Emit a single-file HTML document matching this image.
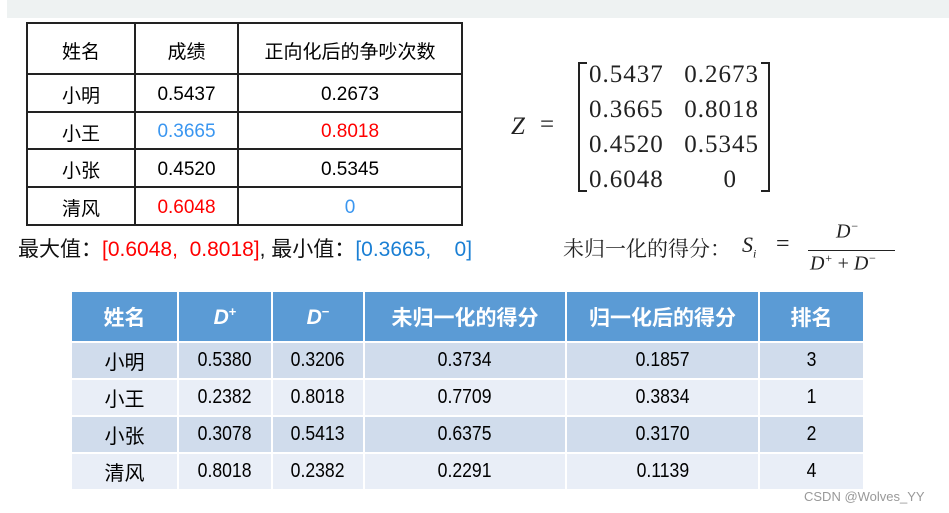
<!DOCTYPE html>
<html><head><meta charset="utf-8"><style>
body{margin:0;width:949px;height:513px;background:#fff;position:relative;overflow:hidden;font-family:"Liberation Sans","Noto Sans CJK SC",sans-serif}
.band{position:absolute;left:7px;top:0;width:942px;height:18px;background:#eef2f2}
table{border-collapse:collapse;position:absolute}
#t1{left:26px;top:22px;font-size:19px;color:#000}
#t1 td{border:2px solid #222;text-align:center;padding:3px 0 0 0}
.r{color:#f00}.b{color:#3a96f0}
.abs{position:absolute;white-space:nowrap}
.m{font-family:"Liberation Serif","DejaVu Serif",serif;font-size:25px;color:#222}
#t2{left:72px;top:292px;border-collapse:separate;border-spacing:2px;margin:-2px}
#t2 td{text-align:center;padding:0;font-size:20px}
#t2 tr.h td{background:#5b9bd5;color:#fff;font-weight:bold;font-size:21px;height:49px}
#t2 tr.o td{background:#d0dcec;height:35px}
#t2 tr.e td{background:#e9eef7;height:35px}
#t2 tr.o td span,#t2 tr.e td span{display:inline-block;transform:scaleX(.88)}
</style></head><body>
<div class="band"></div>
<table id="t1">
<tr style="height:51px"><td style="width:106px">姓名</td><td style="width:101px">成绩</td><td style="width:222px">正向化后的争吵次数</td></tr>
<tr style="height:38px"><td>小明</td><td>0.5437</td><td>0.2673</td></tr>
<tr style="height:37px"><td>小王</td><td class="b">0.3665</td><td class="r">0.8018</td></tr>
<tr style="height:38px"><td>小张</td><td>0.4520</td><td>0.5345</td></tr>
<tr style="height:38px"><td>清风</td><td class="r">0.6048</td><td class="b">0</td></tr>
</table>
<div class="abs" style="left:18px;top:233px;font-size:21px;color:#111">最大值：<span class="r">[0.6048,&nbsp; 0.8018]</span>, 最小值：<span style="color:#1a7fd4">[0.3665, &nbsp;&nbsp; 0]</span></div>
<div class="abs m" style="left:511px;top:113px;font-style:italic">Z</div>
<div class="abs m" style="left:540px;top:111px">=</div>
<div class="abs" style="left:578px;top:62px;width:7px;height:126px;border:2px solid #222;border-right:none"></div>
<div class="abs" style="left:761px;top:62px;width:7px;height:126px;border:2px solid #222;border-left:none"></div>
<div class="abs m" style="left:589px;top:57px;line-height:35px;letter-spacing:1px">0.5437<br>0.3665<br>0.4520<br>0.6048</div>
<div class="abs m" style="left:681px;top:57px;line-height:35px;width:78px;text-align:right;letter-spacing:1px">0.2673<br>0.8018<br>0.5345<br><span style="margin-right:22px">0</span></div>
<div class="abs" style="left:563px;top:233px;font-size:21px;color:#222;font-family:'Noto Serif CJK SC',serif">未归一化的得分：</div>
<div class="abs m" style="left:742px;top:232px;font-size:22px;font-style:italic">S<sub style="font-size:12px">i</sub></div>
<div class="abs m" style="left:776px;top:231px;font-size:24px">=</div>
<div class="abs m" style="left:836px;top:219px;font-size:20px;font-style:italic">D<sup style="font-size:12px">−</sup></div>
<div class="abs" style="left:808px;top:250px;width:87px;height:1px;background:#222"></div>
<div class="abs m" style="left:810px;top:251px;font-size:20px;font-style:italic">D<sup style="font-size:12px">+</sup> <span style="font-style:normal">+</span> D<sup style="font-size:12px">−</sup></div>
<table id="t2">
<tr class="h"><td style="width:105px">姓名</td><td style="width:92px"><i>D</i><sup style="font-size:13px">+</sup></td><td style="width:90px"><i>D</i><sup style="font-size:13px">−</sup></td><td style="width:200px">未归一化的得分</td><td style="width:191px">归一化后的得分</td><td style="width:103px">排名</td></tr>
<tr class="o"><td>小明</td><td><span>0.5380</span></td><td><span>0.3206</span></td><td><span>0.3734</span></td><td><span>0.1857</span></td><td><span>3</span></td></tr>
<tr class="e"><td>小王</td><td><span>0.2382</span></td><td><span>0.8018</span></td><td><span>0.7709</span></td><td><span>0.3834</span></td><td><span>1</span></td></tr>
<tr class="o"><td>小张</td><td><span>0.3078</span></td><td><span>0.5413</span></td><td><span>0.6375</span></td><td><span>0.3170</span></td><td><span>2</span></td></tr>
<tr class="e"><td>清风</td><td><span>0.8018</span></td><td><span>0.2382</span></td><td><span>0.2291</span></td><td><span>0.1139</span></td><td><span>4</span></td></tr>
</table>
<div class="abs" style="left:804px;top:489px;font-size:13px;color:#999">CSDN @Wolves_YY</div>
</body></html>
